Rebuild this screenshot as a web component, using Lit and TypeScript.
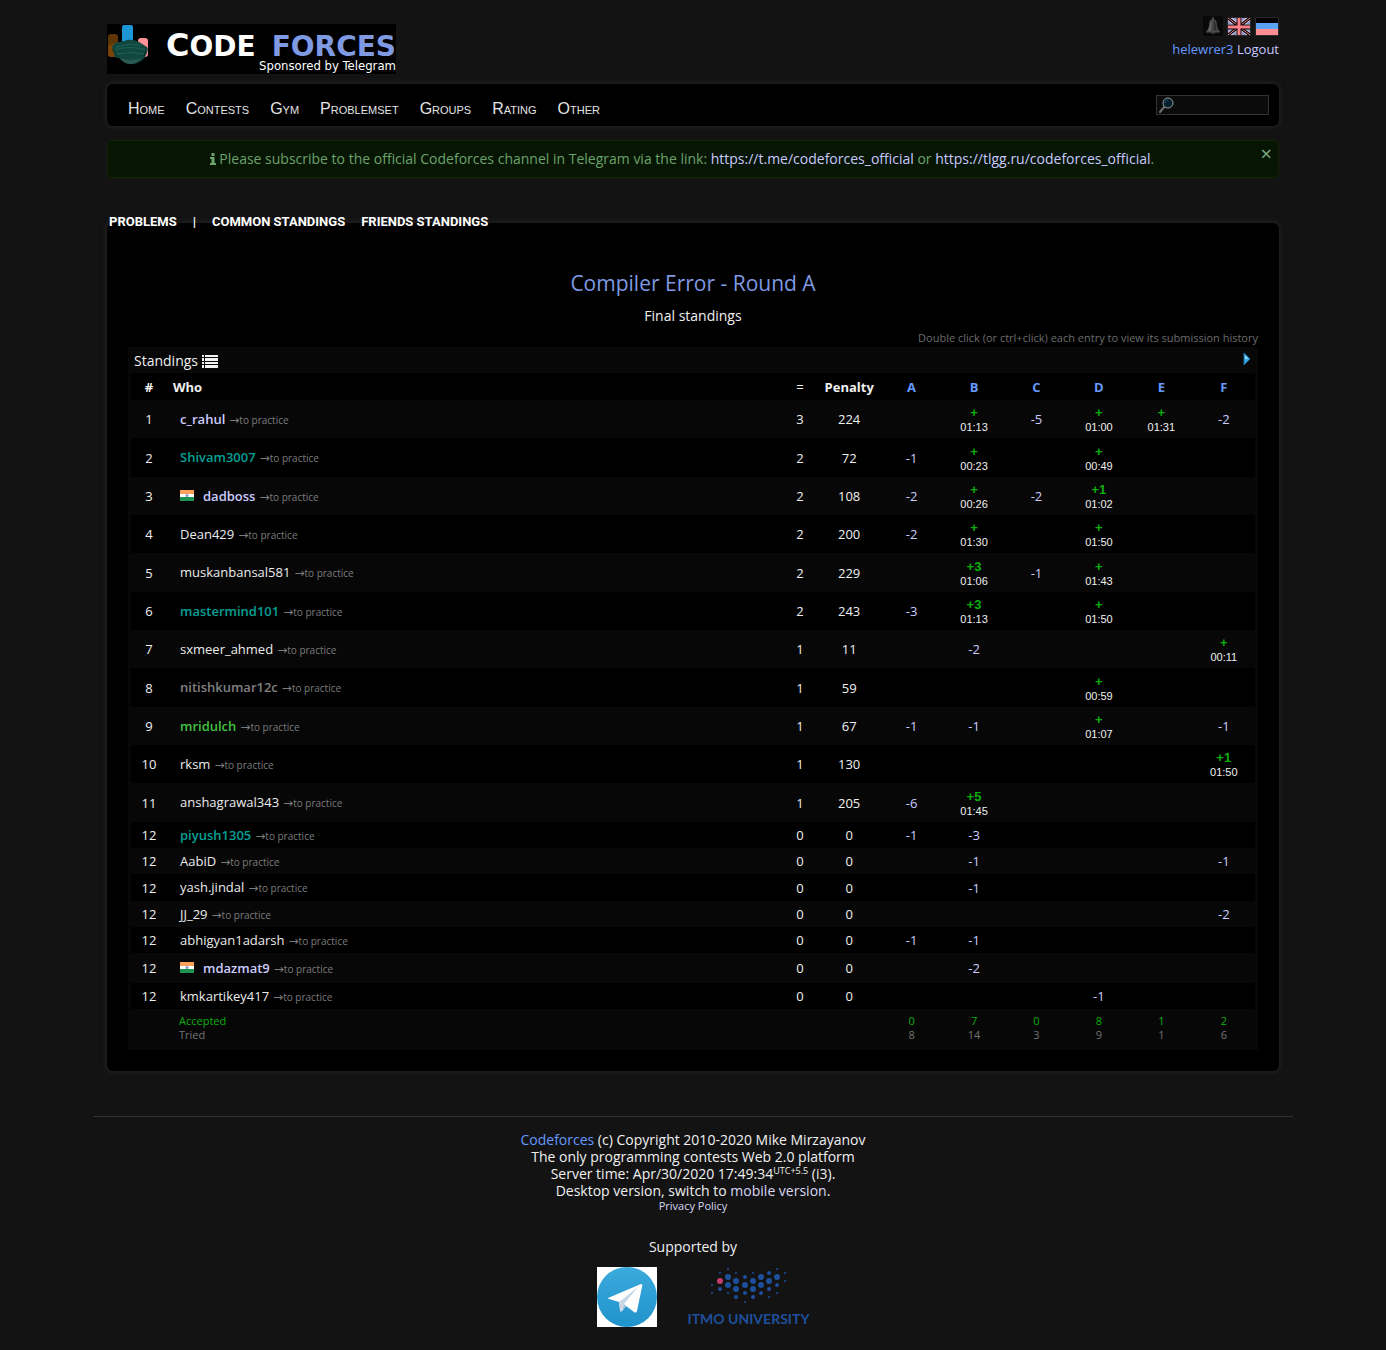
import { LitElement, html, css, svg, nothing } from "lit";
import { customElement } from "lit/decorators.js";
import { classMap } from "lit/directives/class-map.js";

interface Solve {
  points: string;
  time?: string;
}
interface Row {
  place: number;
  name: string;
  rank: string;
  flag?: boolean;
  solved: number;
  penalty: number;
  cells: Record<string, Solve>;
}

const PROBLEMS = ["A", "B", "C", "D", "E", "F"];

/** Parses "B:+/01:13 C:-5" into the results by problem. */
function parse(text: string): Record<string, Solve> {
  const out: Record<string, Solve> = {};
  for (const part of text.split(" ")) {
    const [points, time] = part.slice(2).split("/");
    out[part[0]] = { points, time };
  }
  return out;
}

function row(place: number, name: string, rank: string, solved: number, penalty: number, cells: string, flag = false): Row {
  return { place, name, rank, solved, penalty, cells: parse(cells), flag };
}

const ROWS: Row[] = [
  row(1, "c_rahul", "expert", 3, 224, "B:+/01:13 C:-5 D:+/01:00 E:+/01:31 F:-2"),
  row(2, "Shivam3007", "specialist", 2, 72, "A:-1 B:+/00:23 D:+/00:49"),
  row(3, "dadboss", "expert", 2, 108, "A:-2 B:+/00:26 C:-2 D:+1/01:02", true),
  row(4, "Dean429", "unrated", 2, 200, "A:-2 B:+/01:30 D:+/01:50"),
  row(5, "muskanbansal581", "unrated", 2, 229, "B:+3/01:06 C:-1 D:+/01:43"),
  row(6, "mastermind101", "specialist", 2, 243, "A:-3 B:+3/01:13 D:+/01:50"),
  row(7, "sxmeer_ahmed", "unrated", 1, 11, "B:-2 F:+/00:11"),
  row(8, "nitishkumar12c", "newbie", 1, 59, "D:+/00:59"),
  row(9, "mridulch", "pupil", 1, 67, "A:-1 B:-1 D:+/01:07 F:-1"),
  row(10, "rksm", "unrated", 1, 130, "F:+1/01:50"),
  row(11, "anshagrawal343", "unrated", 1, 205, "A:-6 B:+5/01:45"),
  row(12, "piyush1305", "specialist", 0, 0, "A:-1 B:-3"),
  row(12, "AabiD", "unrated", 0, 0, "B:-1 F:-1"),
  row(12, "yash.jindal", "unrated", 0, 0, "B:-1"),
  row(12, "JJ_29", "unrated", 0, 0, "F:-2"),
  row(12, "abhigyan1adarsh", "unrated", 0, 0, "A:-1 B:-1"),
  row(12, "mdazmat9", "expert", 0, 0, "B:-2", true),
  row(12, "kmkartikey417", "unrated", 0, 0, "D:-1"),
];

const ACCEPTED = [0, 7, 0, 8, 1, 2];
const TRIED = [8, 14, 3, 9, 1, 6];

/** Dots of the university emblem: x, y, radius. */
const DOTS: [number, number, number][] = [
  [9, 18, 1], [9, 26, 1],
  [17, 6, 1], [17, 22, 2],
  [25, 2, 1], [25, 10, 3], [25, 18, 3], [25, 26, 1],
  [33, 6, 1], [33, 14, 3], [33, 22, 3], [33, 30, 2],
  [42, 10, 2], [42, 18, 3], [42, 26, 2], [42, 35, 1],
  [50, 6, 1], [50, 14, 3], [50, 22, 3], [50, 30, 2],
  [58, 10, 3], [58, 18, 3], [58, 26, 2],
  [66, 6, 2], [66, 14, 3], [66, 22, 2], [66, 30, 1],
  [74, 2, 1], [74, 10, 3], [74, 18, 2], [74, 26, 1],
  [82, 6, 1], [82, 14, 1],
];

const maskIcon = html`<svg class="mask" width="42" height="42" viewBox="0 0 42 42" aria-hidden="true">
  <rect x="1" y="10" width="10" height="23" rx="3" fill="#5e3504" />
  <path d="M1 22q6-4 10-3v14H4q-3 0-3-3z" fill="#7a4506" />
  <rect x="15" y="1" width="11" height="25" rx="2" fill="#1d96d6" />
  <rect x="31" y="14" width="10" height="19" rx="3" fill="#ff9298" />
  <path d="M5 22C9 17 15 18 20 16q6-1 12 2l8 5q2 2-1 8-3 7-12 9-9 1-15-6-6 0-5-5z" fill="#12473f" />
  <path d="M8 26q14-5 32 0M9 30q14-3 29 0M9 23q12-4 25-2" fill="none" stroke="#1c6156" stroke-width="1" />
  <path d="M13 34q12 4 21 0-5 6-10 6-7 0-11-6z" fill="#2c5a53" />
  <path d="M5 25l6 8M39 25l-2 7" stroke="#092d28" stroke-width="1" />
</svg>`;

const bellIcon = html`<svg width="20" height="20" viewBox="0 0 20 20" aria-hidden="true">
  <rect width="20" height="20" fill="#090909" />
  <path d="M10 1v3" stroke="#777" stroke-width="1" />
  <path d="M9 3h2q3 1 3 6l1 4 2 3H3l2-3 1-4q0-5 3-6z" fill="#444" />
  <path d="M9 4q-2 2-2 6l-2 5h3z" fill="#686868" />
  <path d="M11 4q2 4 2 10h-2z" fill="#2c2c2c" />
  <path d="M3 16h14M8 17h4" stroke="#555" stroke-width="1" />
</svg>`;

const ukFlag = html`<svg width="24" height="19" viewBox="0 0 24 19" aria-hidden="true">
  <rect width="24" height="19" rx="1" fill="#2a2a2a" />
  <rect x="1" y="1" width="22" height="17" fill="#dcdcff" />
  <path d="M5 1h4v3zM15 1h4l-4 3zM1 4v3h4zM23 4v3h-4zM1 12v3l4-3zM23 12v3l-4-3zM9 14v4H5zM15 14v4h4z" fill="#9292c6" />
  <path d="M1 1l22 17M23 1L1 18" stroke="#000" stroke-width="3" />
  <path d="M1 1l22 17M23 1L1 18" stroke="#ff7f86" stroke-width="1" />
  <path d="M12 1v17M1 10h22" stroke="#000" stroke-width="5" />
  <path d="M12 1v17M1 10h22" stroke="#ff8088" stroke-width="3" />
</svg>`;

const ruFlag = html`<svg width="24" height="19" viewBox="0 0 24 19" aria-hidden="true">
  <rect width="24" height="19" rx="1" fill="#2a2a2a" />
  <rect x="1" y="1" width="22" height="6" fill="#000" />
  <rect x="1" y="6" width="22" height="6" fill="#5aa2f2" />
  <rect x="1" y="12" width="22" height="6" fill="#ff8d92" />
</svg>`;

const searchIcon = html`<svg class="lens" width="16" height="16" viewBox="0 0 16 16" aria-hidden="true">
  <path d="M2 15l5-6" stroke="#6f6f6f" stroke-width="2" stroke-linecap="round" />
  <circle cx="10" cy="6" r="5" fill="#04202f" stroke="#9a9a9a" stroke-width="1" />
  <path d="M7 6q0-3 3-3" stroke="#1b4a66" stroke-width="1" fill="none" />
</svg>`;

const infoIcon = html`<svg width="6" height="12" viewBox="0 0 6 12" aria-hidden="true">
  <path d="M1.500 0h3v3h-3zM0 4h4.500v6H6v2H0v-2h1.500V6H0z" fill="currentColor" />
</svg>`;

const listIcon = html`<svg width="16" height="13" viewBox="0 0 16 13" aria-hidden="true">
  <path d="M0 0h2v2H0zM3 0h13v2H3zM0 3h2v3H0zM3 3h13v3H3zM0 7h2v2H0zM3 7h13v2H3zM0 10h2v3H0zM3 10h13v3H3z" fill="#f2f2f2" />
</svg>`;

const arrowIcon = html`<svg width="8" height="14" viewBox="0 0 8 14" aria-hidden="true">
  <path d="M1 1l6 6-6 6z" fill="#37a7ea" stroke="#1c6ea6" stroke-width="1" />
  <path d="M2 3l3 4H2z" fill="#9bdcff" />
</svg>`;

const indiaFlag = html`<svg class="flag" width="14" height="11" viewBox="0 0 14 11" role="img" aria-label="India">
  <rect width="14" height="4" fill="#f9a05a" />
  <rect y="4" width="14" height="3" fill="#fff" />
  <rect y="7" width="14" height="4" fill="#1c9150" />
  <circle cx="7" cy="5.500" r="1.500" fill="#8a9ad0" />
</svg>`;

const telegramLogo = html`<svg width="60" height="60" viewBox="0 0 60 60" role="img" aria-label="Telegram">
  <defs>
    <linearGradient id="sky" x1="0" y1="0" x2="0" y2="1">
      <stop offset="0" stop-color="#3baadc" />
      <stop offset="1" stop-color="#2093cc" />
    </linearGradient>
  </defs>
  <rect width="60" height="60" fill="#fff" />
  <circle cx="30" cy="30" r="30" fill="url(#sky)" />
  <path d="M11 31L44 17q2 0 1 3l-5 24q-1 3-3 1l-8-6-4 5q-2 1-2-1l-1-8-10-3q-2-1-1-1z" fill="#fff" />
  <path d="M22 35l19-15-14 17-3 8q-1 0-1-2z" fill="#c5d6e6" />
  <path d="M27 37l2 2-4 5z" fill="#a5bdd2" />
</svg>`;

const itmoDots = html`<svg width="92" height="38" viewBox="0 0 92 38" aria-hidden="true">
  ${DOTS.map(([x, y, r]) => svg`<circle cx=${x} cy=${y} r=${r} fill="#1e4f9c" />`)}
  <circle cx="17" cy="14" r="3" fill="#c23e6c" />
</svg>`;

@customElement("app-root")
export class AppRoot extends LitElement {
  static styles = css`
    :host {
      display: block;
      box-sizing: border-box;
      min-height: 100vh;
      background: #131313;
      color: #f0f0f0;
      font-family: "Open Sans", "Liberation Sans", sans-serif;
      font-size: 14px;
      line-height: 18px;
    }
    * { box-sizing: border-box; }
    a { color: #c9c9ff; text-decoration: none; }
    svg { display: block; flex: none; }
    .page { max-width: 1200px; margin: 0 auto; }
    .body { padding: 16px 14px 0; }
    header { display: flex; justify-content: space-between; align-items: flex-start; height: 68px; }
    .logo {
      position: relative;
      display: flex;
      flex-direction: column;
      align-items: flex-end;
      width: 289px;
      height: 50px;
      margin-top: 8px;
      background: #000;
      color: #fff;
    }
    .mask { position: absolute; left: 0; top: 0; }
    .brand {
      display: flex;
      align-items: baseline;
      gap: 16px;
      height: 34px;
      font: bold 28px/42px "DejaVu Sans", sans-serif;
      white-space: nowrap;
    }
    .brand .cap { font-size: 32px; }
    .brand .tail { color: #7f9ae2; }
    .sponsor { font: 13px/16px "DejaVu Sans Condensed", sans-serif; }
    .account { display: flex; flex-direction: column; align-items: flex-end; gap: 4px; font-size: 13px; }
    .langs { display: flex; align-items: center; gap: 4px; height: 20px; }
    .blue { color: #6699ff; }
    .menu {
      display: flex;
      align-items: center;
      justify-content: space-between;
      height: 42px;
      padding: 0 10px 0 21px;
      background: #000;
      border-radius: 6px;
      box-shadow: 0 0 6px #2a2a2a;
    }
    .menu nav {
      display: flex;
      gap: 21px;
      padding-top: 8px;
      font: 16px/18px "Liberation Sans", sans-serif;
      font-variant: small-caps;
    }
    .menu a { color: #e4e4e4; }
    .search { position: relative; }
    .search input {
      display: block;
      width: 113px;
      height: 20px;
      padding: 0 4px 0 22px;
      border: 1px solid #333;
      background: #0b0b0b;
      color: #ddd;
      font: inherit;
    }
    .lens { position: absolute; left: 2px; top: 2px; }
    .notice {
      display: flex;
      align-items: flex-start;
      margin-top: 14px;
      height: 38px;
      padding: 9px 6px 0 20px;
      border: 1px solid #122604;
      border-radius: 4px;
      background: #071503;
      color: #6ba36d;
    }
    .notice p { display: flex; flex: 1; justify-content: center; align-items: center; gap: 3px; margin: 0 24px 0 0; }
    .notice button {
      margin: -5px 0 0;
      padding: 0;
      border: 0;
      background: none;
      color: #7fb082;
      font: 20px/18px "Open Sans", sans-serif;
    }
    .tabs {
      position: relative;
      display: flex;
      gap: 16px;
      margin: 34px 0 -9px;
      padding-left: 2px;
      font: bold 13px/20px Roboto, "Liberation Sans", sans-serif;
    }
    .tabs a, .tabs span { color: #fff; }
    main {
      padding: 46px 21px 21px;
      background: #000;
      border-radius: 6px;
      box-shadow: 0 0 6px #2a2a2a;
    }
    h1 { margin: 0; color: #7f9ae2; font-weight: 400; font-size: 21px; line-height: 28px; text-align: center; }
    .sub { margin: 10px 0 4px; text-align: center; }
    .hint { margin: 0; color: #6c6c6c; font-size: 11px; line-height: 18px; text-align: right; }
    .frame { padding: 0 3px 3px; background: #070707; }
    .caption { display: flex; align-items: center; height: 26px; padding: 2px 4px 0 3px; gap: 4px; }
    .caption button { margin: -4px 0 0 auto; padding: 0; border: 0; background: none; }
    table { width: 100%; border-collapse: collapse; table-layout: fixed; font-size: 13px; line-height: 14px; text-align: center; }
    .narrow { width: 36px; }
    .wide { width: calc(100% / 18); }
    th, td { padding: 0; }
    th { height: 27px; background: #000; font-weight: 700; }
    .thin { font-weight: 400; }
    .head-who { padding-left: 6px; text-align: left; }
    .who { padding-left: 13px; text-align: left; }
    tbody tr { height: 26px; }
    tbody tr:nth-child(3n + 2) { height: 27px; }
    tbody tr.tall { height: 38px; }
    tbody tr.tall:nth-child(3n + 2) { height: 39px; }
    tbody tr.flagged:not(.tall) { height: 30px; }
    tbody tr:nth-child(even) { background: #000; }
    .entry { display: flex; align-items: baseline; gap: 4px; }
    .flag { margin-right: 5px; }
    .entry a { font-weight: 600; }
    .expert { color: #ccccff; }
    .specialist { color: #03a095; }
    .newbie { color: #808080; }
    .pupil { color: #42c242; }
    .entry .unrated { color: #ececec; font-weight: 400; }
    .entry .practice { color: #7c7c7c; font-weight: 400; font-size: 10px; }
    .to { font-family: "DejaVu Sans", sans-serif; font-size: 12px; }
    .ok { display: block; padding-top: 2px; color: #0cae0c; font: bold 13px/14px "Liberation Sans", sans-serif; }
    .time { display: block; font: 11px/14px "Liberation Sans", sans-serif; }
    .fail { color: #ccccff; }
    tfoot td { height: 38px; font-size: 11px; color: #747474; }
    tfoot .label { padding-left: 12px; text-align: left; }
    tfoot span { display: block; }
    .acc { color: #0cae0c; }
    footer { margin-top: 45px; padding: 14px 0 20px; border-top: 1px solid #333; line-height: 17px; text-align: center; }
    footer p { margin: 0; }
    sup { font-size: 9px; line-height: 0; vertical-align: 5px; }
    .privacy { font-size: 11px; line-height: 14px; }
    .pale { color: #d8d8f6; }
    .support { padding-top: 25px; }
    .logos { display: flex; justify-content: center; gap: 31px; padding: 12px 0 0 20px; }
    .itmo { display: flex; flex-direction: column; align-items: center; gap: 5px; color: #1e4f9c; font: bold 14px/18px Lato, sans-serif; }
  `;

  private cell(s?: Solve) {
    if (!s) return nothing;
    return s.time
      ? html`<span class="ok">${s.points}</span><span class="time">${s.time}</span>`
      : html`<span class="fail">${s.points}</span>`;
  }

  private line(r: Row) {
    const tall = Object.values(r.cells).some((c) => c.time);
    return html`<tr class=${classMap({ tall, flagged: !!r.flag })}>
      <td>${r.place}</td>
      <td class="who">
        <div class="entry">${r.flag ? indiaFlag : nothing}<a class=${r.rank} href="#">${r.name}</a><a class="practice" href="#"><span class="to">→</span>to practice</a></div>
      </td>
      <td>${r.solved}</td>
      <td>${r.penalty}</td>
      ${PROBLEMS.map((p) => html`<td>${this.cell(r.cells[p])}</td>`)}
    </tr>`;
  }

  render() {
    return html`<div class="page">
      <div class="body">
        <header>
          <a class="logo" href="#">
            ${maskIcon}
            <span class="brand"><span><span class="cap">C</span>ODE</span><span class="tail">FORCES</span></span>
            <span class="sponsor">Sponsored by Telegram</span>
          </a>
          <div class="account">
            <div class="langs">
              <a href="#" aria-label="Notifications">${bellIcon}</a>
              <a href="#" aria-label="English">${ukFlag}</a>
              <a href="#" aria-label="Russian">${ruFlag}</a>
            </div>
            <div><a class="blue" href="#">helewrer3</a> <a href="#">Logout</a></div>
          </div>
        </header>
        <div class="menu">
          <nav>
            ${["Home", "Contests", "Gym", "Problemset", "Groups", "Rating", "Other"].map((m) => html`<a href="#">${m}</a>`)}
          </nav>
          <form class="search"><input type="text" aria-label="Search" />${searchIcon}</form>
        </div>
        <div class="notice">
          <p>
            ${infoIcon}
            <span>Please subscribe to the official Codeforces channel in Telegram via the link:
              <a href="#">https://t.me/codeforces_official</a> or
              <a href="#">https://tlgg.ru/codeforces_official</a>.</span>
          </p>
          <button type="button" aria-label="Close">×</button>
        </div>
        <nav class="tabs">
          <a href="#">PROBLEMS</a><span>|</span><a href="#">COMMON STANDINGS</a><a href="#">FRIENDS STANDINGS</a>
        </nav>
        <main>
          <h1>Compiler Error - Round A</h1>
          <p class="sub">Final standings</p>
          <p class="hint">Double click (or ctrl+click) each entry to view its submission history</p>
          <div class="frame">
            <div class="caption">Standings ${listIcon}<button type="button" aria-label="Expand">${arrowIcon}</button></div>
            <table>
              <colgroup>
                <col class="narrow" /><col /><col class="narrow" /><col class="wide" />
                ${PROBLEMS.map(() => html`<col class="wide" />`)}
              </colgroup>
              <thead>
                <tr>
                  <th>#</th>
                  <th class="head-who">Who</th>
                  <th class="thin">=</th>
                  <th>Penalty</th>
                  ${PROBLEMS.map((p) => html`<th><a class="blue" href="#">${p}</a></th>`)}
                </tr>
              </thead>
              <tbody>
                ${ROWS.map((r) => this.line(r))}
              </tbody>
              <tfoot>
                <tr>
                  <td></td>
                  <td class="label"><span class="acc">Accepted</span><span>Tried</span></td>
                  <td></td>
                  <td></td>
                  ${PROBLEMS.map((_, i) => html`<td><span class="acc">${ACCEPTED[i]}</span><span>${TRIED[i]}</span></td>`)}
                </tr>
              </tfoot>
            </table>
          </div>
        </main>
      </div>
      <footer>
        <p><a class="blue" href="#">Codeforces</a> (c) Copyright 2010-2020 Mike Mirzayanov</p>
        <p>The only programming contests Web 2.0 platform</p>
        <p>Server time: Apr/30/2020 17:49:34<sup>UTC+5.5</sup> (i3).</p>
        <p>Desktop version, switch to <a class="pale" href="#">mobile version</a>.</p>
        <p class="privacy"><a class="pale" href="#">Privacy Policy</a></p>
        <p class="support">Supported by</p>
        <div class="logos">
          <a href="#">${telegramLogo}</a>
          <a class="itmo" href="#">${itmoDots}<span>ITMO UNIVERSITY</span></a>
        </div>
      </footer>
    </div>`;
  }
}
